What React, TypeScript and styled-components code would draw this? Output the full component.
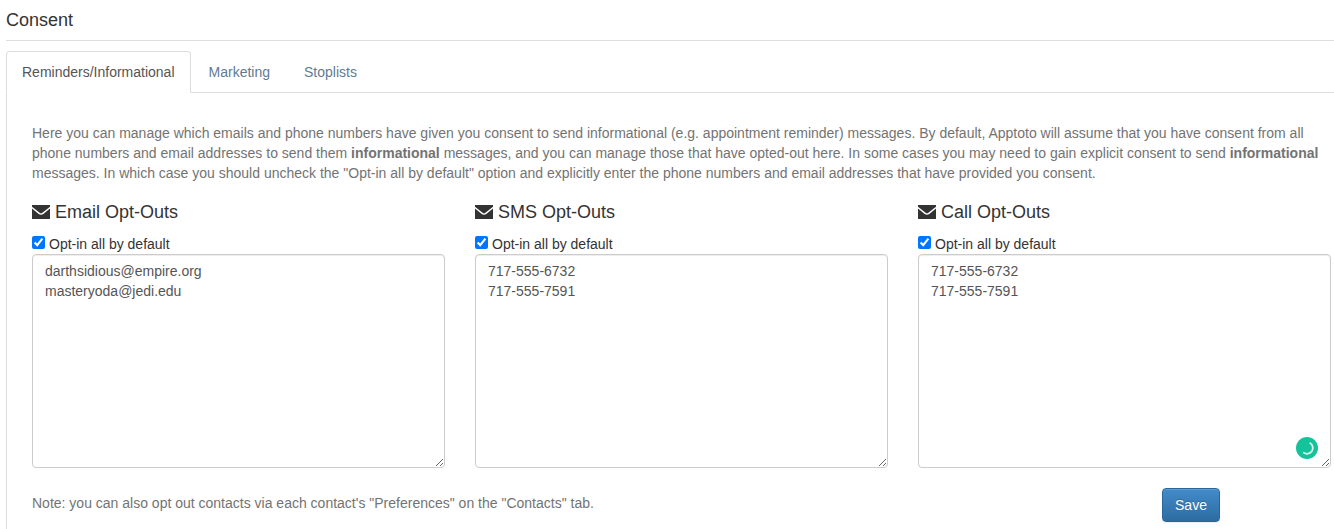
import React from "react";
import styled, { createGlobalStyle } from "styled-components";

const GlobalStyle = createGlobalStyle`
  *, *::before, *::after { box-sizing: border-box; }
  html { overflow: hidden; }
  body {
    margin: 0;
    background: #fff;
    color: #333;
    font: 14px/20px "Helvetica Neue", "Liberation Sans", Arial, sans-serif;
  }
`;

const Page = styled.main`
  height: 529px;
  padding-left: 6px;
  overflow: hidden;
`;

const Header = styled.header`
  height: 41px;
  padding-top: 10px;
  border-bottom: 1px solid #ddd;
`;

const Title = styled.h1`
  margin: 0;
  font-size: 18px;
  font-weight: 400;
  line-height: 20px;
`;

const Tabs = styled.nav`
  display: flex;
  gap: 2px;
  margin-top: 10px;
  border-bottom: 1px solid #ddd;
`;

const Tab = styled.a<{ $active?: boolean }>`
  margin-bottom: -1px;
  padding: 10px 15px;
  border: 1px solid;
  border-color: ${(p) => (p.$active ? "#ddd #ddd #fff" : "transparent")};
  border-radius: 4px 4px 0 0;
  background: ${(p) => (p.$active ? "#fff" : "transparent")};
  color: ${(p) => (p.$active ? "#555" : "#5f7b92")};
`;

const Panel = styled.section`
  height: 440px;
  padding: 30px 3px 0 25px;
  border-left: 1px solid #ddd;
`;

const Intro = styled.p`
  margin: 0 0 19px;
  color: #737373;
`;

const Columns = styled.div`
  display: grid;
  grid-template-columns: repeat(3, 413px);
  gap: 30px;
`;

const Column = styled.div`
  display: flex;
  flex-direction: column;
`;

const Heading = styled.h2`
  display: flex;
  align-items: center;
  gap: 5px;
  height: 20px;
  margin: 0 0 12px;
  font-size: 18px;
  font-weight: 400;
  line-height: 20px;
`;

const Envelope = styled.svg`
  display: block;
  width: 18px;
  height: 14px;
`;

const OptIn = styled.label`
  display: flex;
  gap: 4px;
  height: 20px;
`;

const Checkbox = styled.input`
  width: 13px;
  height: 13px;
  margin: 2px 0 0;
`;

const Field = styled.div`
  position: relative;
  display: flex;
`;

const List = styled.textarea`
  width: 100%;
  height: 214px;
  padding: 6px 12px;
  border: 1px solid #ccc;
  border-radius: 4px;
  background: #fff;
  box-shadow: inset 0 1px 1px rgba(0, 0, 0, 0.075);
  color: #555;
  font: inherit;
  outline: none;
`;

const Spinner = styled.svg`
  position: absolute;
  right: 13px;
  bottom: 9px;
  width: 22px;
  height: 22px;
`;

const Footer = styled.footer`
  display: flex;
  align-items: flex-start;
  justify-content: space-between;
  height: 34px;
  margin: 20px 111px 0 0;
  color: #737373;
`;

const Note = styled.p`
  margin: 5px 0 0;
`;

const SaveButton = styled.button`
  width: 58px;
  height: 34px;
  padding: 0;
  border: 1px solid #2b669a;
  border-radius: 4px;
  background: linear-gradient(#428bca, #2d6ca2);
  box-shadow: inset 0 1px 0 rgba(255, 255, 255, 0.15), 0 1px 1px rgba(0, 0, 0, 0.075);
  color: #fff;
  font: inherit;
  text-shadow: 0 -1px 0 rgba(0, 0, 0, 0.2);
`;

const lists = [
  { name: "Email", entries: "darthsidious@empire.org\nmasteryoda@jedi.edu" },
  { name: "SMS", entries: "717-555-6732\n717-555-7591" },
  { name: "Call", entries: "717-555-6732\n717-555-7591", busy: true },
];

export default function App() {
  return (
    <Page>
      <GlobalStyle />
      <Header>
        <Title>Consent</Title>
      </Header>
      <Tabs>
        <Tab $active>Reminders/Informational</Tab>
        <Tab>Marketing</Tab>
        <Tab>Stoplists</Tab>
      </Tabs>
      <Panel>
        <Intro>
          Here you can manage which emails and phone numbers have given you consent to send informational (e.g.
          appointment reminder) messages. By default, Apptoto will assume that you have consent from all phone numbers
          and email addresses to send them <b>informational</b> messages, and you can manage those that have opted-out
          here. In some cases you may need to gain explicit consent to send <b>informational</b> messages. In which case
          you should uncheck the "Opt-in all by default" option and explicitly enter the phone numbers and email
          addresses that have provided you consent.
        </Intro>
        <Columns>
          {lists.map((list) => (
            <Column key={list.name}>
              <Heading>
                <Envelope viewBox="0 0 18 14" fill="#333">
                  <path d="M0 0H18V1.7L10.4 7.7Q9 8.7 7.6 7.7L0 1.7Z" />
                  <path d="M0 3.4L6.7 8.9Q9 10.5 11.3 8.9L18 3.4V14H0Z" />
                </Envelope>
                {list.name} Opt-Outs
              </Heading>
              <OptIn>
                <Checkbox type="checkbox" defaultChecked />
                Opt-in all by default
              </OptIn>
              <Field>
                <List defaultValue={list.entries} spellCheck={false} />
                {list.busy && (
                  <Spinner viewBox="0 0 22 22" fill="none">
                    <circle cx="11" cy="11" r="11" fill="#15c39a" />
                    <path d="M14.3 6.2A5.7 5.7 0 0 1 7.8 15.8" stroke="#d9f6ef" strokeWidth="1.8" strokeLinecap="round" />
                  </Spinner>
                )}
              </Field>
            </Column>
          ))}
        </Columns>
        <Footer>
          <Note>Note: you can also opt out contacts via each contact's "Preferences" on the "Contacts" tab.</Note>
          <SaveButton>Save</SaveButton>
        </Footer>
      </Panel>
    </Page>
  );
}
